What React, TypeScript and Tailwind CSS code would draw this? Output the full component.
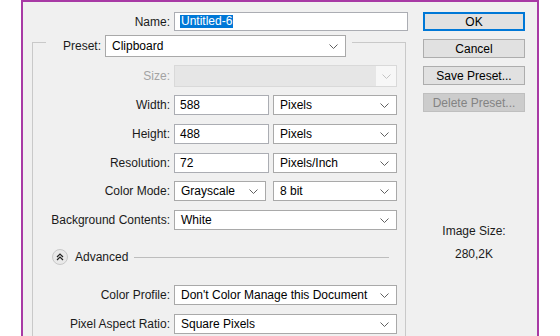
import React from "react";

const font = { fontFamily: '"Liberation Sans", Arial, sans-serif' };

const Chevron: React.FC<{ disabled?: boolean }> = ({ disabled }) => (
  <svg width="9" height="5" viewBox="0 0 9 5" className="shrink-0">
    <path
      d="M0.5 0.5 L4.5 4.5 L8.5 0.5"
      fill="none"
      stroke={disabled ? "#c4c4c4" : "#606060"}
      strokeWidth="1"
    />
  </svg>
);

const Select: React.FC<{ value: string; width: string; height?: string; disabled?: boolean }> = ({
  value,
  width,
  height = "h-[20px]",
  disabled,
}) =>
  disabled ? (
    <div className={`${width} ${height} flex items-stretch border border-[#d9d9d9] bg-[#e6e6e6]`}>
      <div className="flex-1" />
      <div className="w-[20px] flex items-center justify-center bg-[#f7f7f7]">
        <Chevron disabled />
      </div>
    </div>
  ) : (
    <div className={`${width} ${height} flex items-center justify-between border border-[#a9a9a9] bg-white pl-[6px] pr-[7px]`}>
      <span className="text-[12px] text-black whitespace-nowrap leading-none">{value}</span>
      <Chevron />
    </div>
  );

const Input: React.FC<{ value: string; width: string }> = ({ value, width }) => (
  <div className={`${width} h-[20px] flex items-center border border-[#abadb3] bg-white pl-[5px]`}>
    <span className="text-[12px] text-black leading-none">{value}</span>
  </div>
);

const Row: React.FC<{ label: string; mt: string; gap?: string; disabled?: boolean; children: React.ReactNode }> = ({
  label,
  mt,
  gap = "gap-[4px]",
  disabled,
  children,
}) => (
  <div className={`flex items-center ${mt}`}>
    <div className={`w-[137px] text-right text-[12px] ${disabled ? "text-[#a3a3a3]" : "text-[#1a1a1a]"}`}>
      {label}
    </div>
    <div className={`ml-[4px] flex items-center ${gap}`}>{children}</div>
  </div>
);

const Button: React.FC<{ label: string; primary?: boolean; disabled?: boolean; mt: string }> = ({
  label,
  primary,
  disabled,
  mt,
}) => (
  <div
    className={`${mt} w-[102px] h-[19px] flex items-center justify-center text-[12px] ${
      primary
        ? "border-2 border-[#0078d7] bg-[#e1e1e1] text-black"
        : disabled
        ? "border border-[#bfbfbf] bg-[#cccccc] text-[#838383]"
        : "border border-[#adadad] bg-[#e1e1e1] text-black"
    }`}
  >
    {label}
  </div>
);

export default function App() {
  return (
    <div className="w-[560px] h-[336px] bg-white overflow-hidden" style={font}>
      <div className="ml-[21px] w-[518px] h-[336px] border-t-2 border-l-2 border-r-2 border-[#a83aa5] bg-[#f0f0f0] flex">
        {/* form column */}
        <div className="w-[400px]">
          <div className="mt-[10px] flex items-center">
            <div className="w-[147px] text-right text-[12px] text-[#1a1a1a]">Name:</div>
            <div className="ml-[4px] w-[234px] h-[19px] flex items-center border border-[#abadb3] bg-white pl-[5px]">
              <span className="bg-[#0078d7] text-white text-[12px] leading-[13px] px-[1px]">Untitled-6</span>
            </div>
          </div>

          <div className="mt-[11px] ml-[9px] w-[374px] h-[400px] border-t border-l border-r border-[#c9c9c9]">
            {/* preset legend */}
            <div className="-mt-[8px] ml-[13px] w-[306px] flex items-center bg-[#f0f0f0]">
              <div className="pl-[17px] text-[12px] text-[#1a1a1a]">Preset:</div>
              <div className="ml-[4px]">
                <Select value="Clipboard" width="w-[241px]" height="h-[22px]" />
              </div>
            </div>

            <Row label="Size:" mt="mt-[8px]" disabled>
              <Select value="" width="w-[223px]" height="h-[22px]" disabled />
            </Row>
            <Row label="Width:" mt="mt-[8px]">
              <Input value="588" width="w-[95px]" />
              <Select value="Pixels" width="w-[124px]" />
            </Row>
            <Row label="Height:" mt="mt-[9px]">
              <Input value="488" width="w-[95px]" />
              <Select value="Pixels" width="w-[124px]" />
            </Row>
            <Row label="Resolution:" mt="mt-[9px]">
              <Input value="72" width="w-[95px]" />
              <Select value="Pixels/Inch" width="w-[124px]" />
            </Row>
            <Row label="Color Mode:" mt="mt-[8px]" gap="gap-[7px]">
              <Select value="Grayscale" width="w-[92px]" />
              <Select value="8 bit" width="w-[124px]" />
            </Row>
            <Row label="Background Contents:" mt="mt-[9px]">
              <Select value="White" width="w-[223px]" />
            </Row>

            {/* advanced toggle */}
            <div className="mt-[19px] flex items-center h-[16px]">
              <div className="ml-[19px] w-[16px] h-[16px] rounded-full border border-[#c8c8c8] bg-[#e9e9e9] flex items-center justify-center">
                <svg width="8" height="8" viewBox="0 0 8 8">
                  <path d="M1 4 L4 1 L7 4 M1 7 L4 4 L7 7" fill="none" stroke="#222" strokeWidth="1.2" />
                </svg>
              </div>
              <span className="ml-[7px] text-[12px] text-[#1a1a1a]">Advanced</span>
              <div className="ml-[6px] mr-[16px] flex-1 h-px bg-[#bdbdbd]" />
            </div>

            <Row label="Color Profile:" mt="mt-[20px]">
              <Select value="Don't Color Manage this Document" width="w-[223px]" />
            </Row>
            <Row label="Pixel Aspect Ratio:" mt="mt-[9px]">
              <Select value="Square Pixels" width="w-[223px]" />
            </Row>
          </div>
        </div>

        {/* buttons column */}
        <div className="w-[102px] flex flex-col">
          <Button label="OK" primary mt="mt-[10px]" />
          <Button label="Cancel" mt="mt-[8px]" />
          <Button label="Save Preset..." mt="mt-[8px]" />
          <Button label="Delete Preset..." disabled mt="mt-[8px]" />
          <div className="mt-[111px] text-center text-[12px] leading-[16px] text-[#1a1a1a]">Image Size:</div>
          <div className="mt-[7px] text-center text-[12px] leading-[16px] text-[#1a1a1a]">280,2K</div>
        </div>
      </div>
    </div>
  );
}
